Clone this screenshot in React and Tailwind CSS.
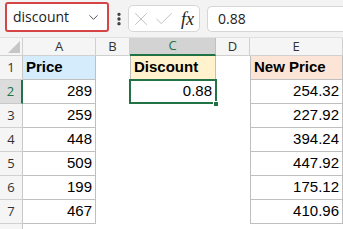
import { ChevronDown, EllipsisVertical, X, Check } from "lucide-react"

const cols = [
  { key: "A", w: "w-[73px]" },
  { key: "B", w: "w-[34px]" },
  { key: "C", w: "w-[86px]" },
  { key: "D", w: "w-[34px]" },
  { key: "E", w: "w-[93px]" },
]

const prices = [289, 259, 448, 509, 199, 467]
const newPrices = ["254.32", "227.92", "394.24", "447.92", "175.12", "410.96"]

const cellFont = { fontFamily: '"Liberation Sans", Arial, sans-serif' }

function Cell({ w, className = "", children }) {
  return (
    <div
      className={`${w} h-[24px] shrink-0 flex items-end pb-[1px] px-[3px] text-[15px] text-black ${className}`}
      style={cellFont}
    >
      {children}
    </div>
  )
}

export default function App() {
  const rows = [1, 2, 3, 4, 5, 6, 7]
  return (
    <div className="w-[343px] h-[229px] overflow-hidden bg-white" style={{ fontFamily: '"Open Sans", "Noto Sans", sans-serif' }}>
      {/* formula bar */}
      <div className="h-[37px] bg-[#f3f3f3] flex items-center">
        <div className="ml-[5px] w-[104px] h-[30px] border-2 border-[#d64545] rounded-[3px] bg-white flex items-center pl-[6px] pr-[6px] self-start mt-[2px]">
          <span className="text-[14px] text-[#222] flex-1 leading-none">discount</span>
          <ChevronDown size={15} strokeWidth={1.6} className="text-[#555]" />
        </div>
        <div className="w-[19px] flex justify-center">
          <EllipsisVertical size={16} strokeWidth={3} className="text-[#333]" />
        </div>
        <div className="w-[72px] h-[27px] bg-white border border-[#d6d6d6] rounded-[5px] flex items-center pl-[1px]">
          <X size={22} strokeWidth={0.9} className="text-[#b5b5b5]" />
          <Check size={22} strokeWidth={0.9} className="text-[#b5b5b5] ml-[1px]" />
          <span className="ml-[6px] text-[18px] italic text-[#222] leading-none" style={{ fontFamily: '"Liberation Serif", serif' }}>fx</span>
        </div>
        <div className="ml-[7px] flex-1 h-[26px] bg-white border border-r-0 border-[#d6d6d6] rounded-l-[5px] flex items-center pl-[10px]">
          <span className="text-[14px] text-[#222] leading-none">0.88</span>
        </div>
      </div>

      {/* column headers */}
      <div className="flex h-[19px] bg-[#f5f5f5] border-t border-[#e0e0e0]">
        <div className="w-[23px] shrink-0 border-r border-b border-[#d0d0d0] relative">
          <div className="absolute right-[2px] bottom-[2px] w-0 h-0 border-l-[12px] border-l-transparent border-b-[12px] border-b-[#c6c6c6]" />
        </div>
        {cols.map((c) =>
          c.key === "C" ? (
            <div key={c.key} className={`${c.w} shrink-0 bg-[#d3d3d3] border-r border-[#c0c0c0] border-b-2 border-b-[#217346] flex items-center justify-center text-[13px] text-[#217346]`}>
              {c.key}
            </div>
          ) : (
            <div key={c.key} className={`${c.w} shrink-0 border-r border-b border-[#d0d0d0] flex items-center justify-center text-[13px] text-[#333]`}>
              {c.key}
            </div>
          )
        )}
      </div>

      {/* rows */}
      {rows.map((r) => (
        <div key={r} className="flex">
          <div
            className={`w-[23px] h-[24px] shrink-0 border-b flex items-center justify-center text-[13px] ${
              r === 2
                ? "bg-[#dcdcdc] border-b-[#c8c8c8] border-r-2 border-r-[#217346] text-[#217346]"
                : "bg-[#f5f5f5] border-b-[#d0d0d0] border-r border-r-[#c8c8c8] text-[#333]"
            }`}
          >
            {r}
          </div>
          <Cell w="w-[73px]" className={`border-r border-b border-[#bfbfbf] ${r === 1 ? "bg-[#d4ecfc] font-bold" : "justify-end"}`}>
            {r === 1 ? "Price" : prices[r - 2]}
          </Cell>
          <Cell w="w-[34px]" />
          {r === 1 ? (
            <Cell w="w-[86px]" className="bg-[#fff2cc] border-l border-r border-b border-[#bfbfbf] font-bold">
              Discount
            </Cell>
          ) : r === 2 ? (
            <div className="relative">
              <Cell w="w-[86px]" className="border-l border-r border-b border-[#bfbfbf] justify-end">
                0.88
              </Cell>
              <div className="absolute -left-[1px] -top-[1px] -right-[1px] -bottom-[0px] border-2 border-[#217346]" />
              <div className="absolute -right-[3px] -bottom-[3px] w-[6px] h-[6px] bg-[#217346] border border-white" />
            </div>
          ) : (
            <Cell w="w-[86px]" />
          )}
          <Cell w="w-[34px]" />
          <Cell w="w-[93px]" className={`border-l border-r border-b border-[#bfbfbf] ${r === 1 ? "bg-[#fce4d6] font-bold" : "justify-end"}`}>
            {r === 1 ? "New Price" : newPrices[r - 2]}
          </Cell>
        </div>
      ))}
      <div className="flex">
        <div className="w-[23px] h-[10px] shrink-0 bg-[#f5f5f5] border-r border-[#c8c8c8]" />
      </div>
    </div>
  )
}
